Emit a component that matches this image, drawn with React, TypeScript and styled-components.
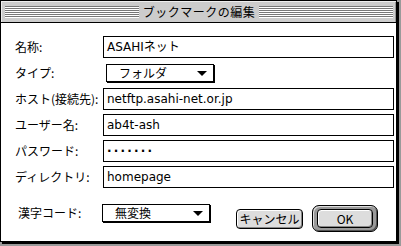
import React from "react";
import styled, { createGlobalStyle } from "styled-components";

const GlobalStyle = createGlobalStyle`
  html, body { margin: 0; padding: 0; background: #9a9a9a; }
  body { font-family: "DejaVu Sans", "Noto Sans CJK JP", sans-serif; font-size: 12px; color: #000; }
`;

const FONT = `"DejaVu Sans", "Noto Sans CJK JP", sans-serif`;
const JP = `"Noto Sans CJK JP", sans-serif`;

const Screen = styled.div`
  width: 401px;
  height: 246px;
  overflow: hidden;
  background: #9a9a9a;
`;

const Window = styled.div`
  box-sizing: border-box;
  width: 397px;
  height: 242px;
  border: 1px solid #000;
  box-shadow: 2px 2px 0 #000;
  background: #fff;
  display: flex;
  flex-direction: column;
`;

const TitleBar = styled.div`
  height: 21px;
  background: #cccccc;
  border-bottom: 1px solid #000;
  box-shadow: inset 1px 1px 0 #eee, inset -1px 0 0 #999;
  display: flex;
  align-items: center;
  padding: 0 3px 0 4px;
  gap: 4px;
`;

const Stripes = styled.div`
  flex: 1;
  height: 12px;
  background: repeating-linear-gradient(
    to bottom,
    #777 0px,
    #777 1px,
    #fff 1px,
    #fff 2px
  );
`;

const Title = styled.div`
  font-family: ${JP};
  font-size: 12px;
  line-height: 18px;
  letter-spacing: 0.5px;
  white-space: nowrap;
`;

const Body = styled.div`
  flex: 1;
  padding: 13px 1px 0 14px;
  display: flex;
  flex-direction: column;
`;

const Form = styled.div`
  display: grid;
  grid-template-columns: 88px 291px;
  grid-auto-rows: 22px;
  row-gap: 4px;
  align-items: center;
`;

const Label = styled.div`
  font-family: ${JP};
  font-size: 12px;
  line-height: 16px;
  white-space: nowrap;
`;

const Field = styled.div`
  box-sizing: border-box;
  height: 22px;
  border: 1px solid #000;
  padding-left: 3px;
  font-family: ${FONT};
  font-size: 12px;
  line-height: 20px;
  white-space: nowrap;
  overflow: hidden;
`;

const Dots = styled.span`
  letter-spacing: 2.2px;
  font-weight: bold;
`;

const Popup = styled.div<{ $width: number }>`
  box-sizing: border-box;
  width: ${(p) => p.$width}px;
  height: 18px;
  border: 1px solid #000;
  box-shadow: 1px 1px 0 #000;
  background: #fff;
  display: flex;
  align-items: center;
  justify-content: space-between;
  padding: 0 6px 0 12px;
  font-family: ${JP};
  font-size: 12px;
  line-height: 16px;
`;

const PopupWrap = styled.div`
  padding-left: 3px;
  align-self: start;
  margin-top: 2px;
`;

const BottomRow = styled.div`
  display: flex;
  align-items: flex-start;
  margin-top: 16px;
`;

const KanjiLabel = styled.div`
  width: 87px;
  padding-left: 3px;
  box-sizing: border-box;
  font-family: ${JP};
  font-size: 12px;
  line-height: 18px;
  white-space: nowrap;
`;

const Spacer = styled.div`
  width: 26px;
`;

const Button = styled.div`
  box-sizing: border-box;
  height: 20px;
  border: 1px solid #000;
  border-radius: 4px;
  background: #dddddd;
  box-shadow: inset 1px 1px 0 #fff, inset -1px -1px 0 #888;
  display: flex;
  align-items: center;
  justify-content: center;
  font-family: ${JP};
  font-size: 12px;
  line-height: 16px;
`;

const CancelButton = styled(Button)`
  width: 67px;
  margin-top: 5px;
`;

const DefaultRing = styled.div`
  box-sizing: border-box;
  width: 66px;
  height: 27px;
  margin-left: 9px;
  margin-top: 1px;
  border: 1px solid #000;
  border-radius: 7px;
  background: #999;
  box-shadow: inset 1px 1px 0 #ddd, inset -1px -1px 0 #555;
  padding: 3px 4px;
  display: flex;
`;

const OkButton = styled(Button)`
  flex: 1;
  height: 19px;
`;

function Arrow() {
  return (
    <svg width="10" height="5" viewBox="0 0 10 5" style={{ display: "block" }}>
      <polygon points="0,0 10,0 5,5" fill="#000" />
    </svg>
  );
}

export default function App() {
  return (
    <Screen>
      <GlobalStyle />
      <Window>
        <TitleBar>
          <Stripes />
          <Title>ブックマークの編集</Title>
          <Stripes />
        </TitleBar>
        <Body>
          <Form>
            <Label>名称:</Label>
            <Field>ASAHIネット</Field>
            <Label>タイプ:</Label>
            <PopupWrap>
              <Popup $width={108}>
                <span>フォルダ</span>
                <Arrow />
              </Popup>
            </PopupWrap>
            <Label>ホスト(接続先):</Label>
            <Field>netftp.asahi-net.or.jp</Field>
            <Label>ユーザー名:</Label>
            <Field>ab4t-ash</Field>
            <Label>パスワード:</Label>
            <Field>
              <Dots>·······</Dots>
            </Field>
            <Label>ディレクトリ:</Label>
            <Field>homepage</Field>
          </Form>
          <BottomRow>
            <KanjiLabel>漢字コード:</KanjiLabel>
            <Popup $width={108}>
              <span>無変換</span>
              <Arrow />
            </Popup>
            <Spacer />
            <CancelButton>キャンセル</CancelButton>
            <DefaultRing>
              <OkButton>OK</OkButton>
            </DefaultRing>
          </BottomRow>
        </Body>
      </Window>
    </Screen>
  );
}
